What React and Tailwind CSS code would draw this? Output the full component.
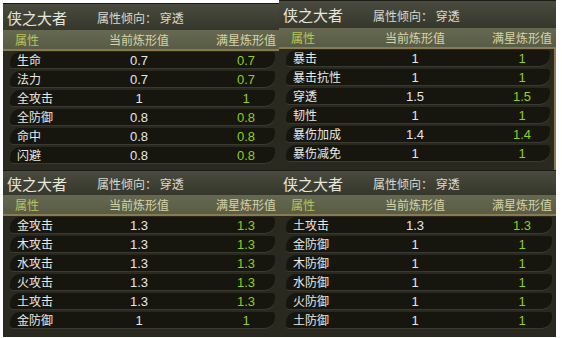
const cjk = { fontFamily: '"Noto Sans CJK SC", "Noto Sans", sans-serif' };

const panels = [
  {
    title: 'h-[26px]',
    wrap: 'mt-[3px]',
    rows: [
      ['生命', '0.7', '0.7'],
      ['法力', '0.7', '0.7'],
      ['全攻击', '1', '1'],
      ['全防御', '0.8', '0.8'],
      ['命中', '0.8', '0.8'],
      ['闪避', '0.8', '0.8'],
    ],
  },
  {
    title: 'h-[27px]',
    wrap: '',
    framed: true,
    rows: [
      ['暴击', '1', '1'],
      ['暴击抗性', '1', '1'],
      ['穿透', '1.5', '1.5'],
      ['韧性', '1', '1'],
      ['暴伤加成', '1.4', '1.4'],
      ['暴伤减免', '1', '1'],
    ],
  },
  {
    title: 'h-[24px]',
    wrap: '',
    rows: [
      ['金攻击', '1.3', '1.3'],
      ['木攻击', '1.3', '1.3'],
      ['水攻击', '1.3', '1.3'],
      ['火攻击', '1.3', '1.3'],
      ['土攻击', '1.3', '1.3'],
      ['金防御', '1', '1'],
    ],
  },
  {
    title: 'h-[24px]',
    wrap: '',
    rows: [
      ['土攻击', '1.3', '1.3'],
      ['金防御', '1', '1'],
      ['木防御', '1', '1'],
      ['水防御', '1', '1'],
      ['火防御', '1', '1'],
      ['土防御', '1', '1'],
    ],
  },
];

function Panel({ title, wrap, framed, rows }) {
  return (
    <div className={`flex flex-col bg-[#29291f] overflow-hidden border-t border-[#1c1c16] ${wrap}`}>
      <div className={`${title} flex items-center pl-[4px] bg-gradient-to-b from-[#4a4b3e] to-[#36372c]`} style={cjk}>
        <span className="w-[90px] text-[15px] text-[#e6e6de] leading-none">侠之大者</span>
        <span className="text-[12px] text-[#d9d9cd] leading-none pt-[2px]">属性倾向：&nbsp;穿透</span>
      </div>
      <div className="h-[21px] pl-[7px] grid grid-cols-[97px_64px_45px_60px] items-center bg-gradient-to-b from-[#666950] to-[#595c45] border-b-2 border-[#8b7a50] text-[12px] leading-none whitespace-nowrap" style={cjk}>
        <span className="pl-[5px] text-[#b9c35a]">属性</span>
        <span className="flex justify-center text-[#d6d3a6]">当前炼形值</span>
        <span />
        <span className="flex justify-center text-[#d6d3a6]">满星炼形值</span>
      </div>
      <div className={`flex-1 flex flex-col gap-[3px] pt-[1px] ${framed ? 'border-r-2 border-[#8b7a50]' : ''}`}>
        {rows.map(([name, cur, max]) => (
          <div
            key={name}
            className="h-[16px] ml-[7px] mr-[4px] grid grid-cols-[97px_64px_45px_60px] items-center bg-[#16160f] rounded-tl-[10px] rounded-br-[10px] rounded-tr-[3px] rounded-bl-[3px] shadow-[0_1px_0_#3a3a30]"
          >
            <span className="pl-[7px] text-[12px] text-[#e8e8e4] leading-none" style={cjk}>{name}</span>
            <span className="text-center text-[13px] text-[#e6e6e6] leading-none font-['Liberation_Sans',Arial,sans-serif]">{cur}</span>
            <span />
            <span className="text-center text-[13px] text-[#8fcf17] leading-none font-['Liberation_Sans',Arial,sans-serif]">{max}</span>
          </div>
        ))}
      </div>
    </div>
  );
}

export default function App() {
  return (
    <div className="w-[562px] h-[338px] bg-white overflow-hidden">
      <div className="ml-[3px] w-[553px] grid grid-cols-[276px_277px] grid-rows-[170px_167px]">
        {panels.map((p, i) => (
          <Panel key={i} {...p} />
        ))}
      </div>
    </div>
  );
}
